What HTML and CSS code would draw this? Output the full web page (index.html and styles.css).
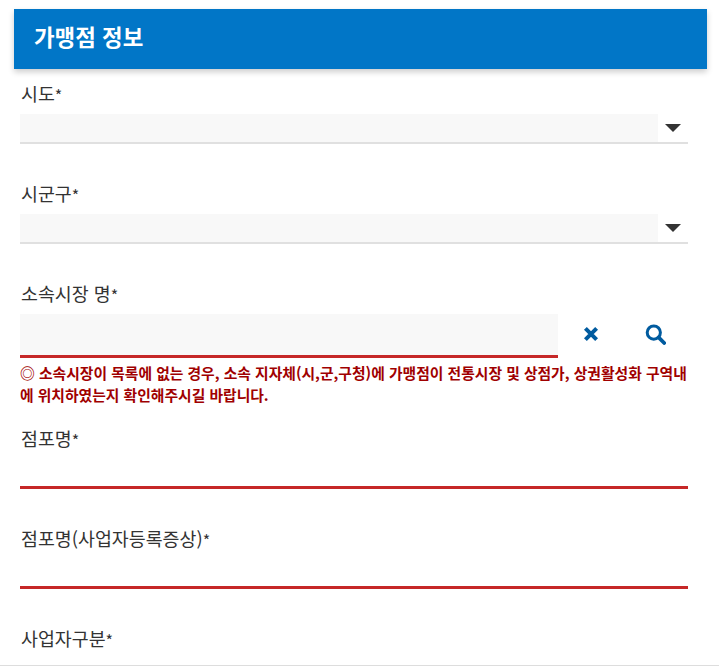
FILE: index.html
```html
<!DOCTYPE html>
<html lang="ko">
<head>
    <meta charset="UTF-8">
    <meta name="viewport" content="width=device-width, initial-scale=1.0">
    <title>가맹점 정보</title>
    <link rel="stylesheet" href="styles.css">
</head>
<body>
    <div class="page">
        <h2 class="section-title">가맹점 정보</h2>

        <div class="form-body">
            <div class="field field-first">
                <label class="field-label">시도<span class="req">*</span></label>
                <div class="select-box">
                    <div class="select-value"></div>
                    <div class="select-arrow"><span class="caret"></span></div>
                </div>
            </div>

            <div class="field">
                <label class="field-label">시군구<span class="req">*</span></label>
                <div class="select-box">
                    <div class="select-value"></div>
                    <div class="select-arrow"><span class="caret"></span></div>
                </div>
            </div>

            <div class="field">
                <label class="field-label">소속시장 명<span class="req">*</span></label>
                <div class="search-row">
                    <div class="search-input"></div>
                    <button class="icon-btn btn-clear" type="button" aria-label="지우기">
                        <svg width="16" height="16" viewBox="0 0 16 16"><path d="M2.4 2.4l11.2 11.2M13.6 2.4L2.4 13.6" stroke="#005b9f" stroke-width="4" fill="none"/></svg>
                    </button>
                    <button class="icon-btn btn-search" type="button" aria-label="검색">
                        <svg width="21" height="21" viewBox="0 0 21 21"><circle cx="8.8" cy="8.6" r="6.6" stroke="#005b9f" stroke-width="3" fill="none"/><path d="M13.6 13.4l5.6 5.6" stroke="#005b9f" stroke-width="3.8" fill="none" stroke-linecap="round"/></svg>
                    </button>
                </div>
                <p class="notice">◎ 소속시장이 목록에 없는 경우, 소속 지자체(시,군,구청)에 가맹점이 전통시장 및 상점가, 상권활성화 구역내에 위치하였는지 확인해주시길 바랍니다.</p>
            </div>

            <div class="field field-name">
                <label class="field-label">점포명<span class="req">*</span></label>
                <div class="text-input"></div>
            </div>

            <div class="field">
                <label class="field-label">점포명(사업자등록증상)<span class="req">*</span></label>
                <div class="text-input"></div>
            </div>

            <div class="field">
                <label class="field-label">사업자구분<span class="req">*</span></label>
            </div>
        </div>
    </div>
</body>
</html>
```

FILE: styles.css
```css
* {
    box-sizing: border-box;
    font-family: "Noto Sans CJK KR", "Noto Sans", sans-serif;
}

html, body {
    height: 100%;
}

body {
    margin: 0;
    background-color: #fff;
    color: #333;
    overflow: hidden;
}

.page {
    height: 666px;
    padding: 9px 12px 0 14px;
    border-bottom: 1px solid #ddd;
    overflow: hidden;
}

.section-title {
    margin: 0;
    height: 60px;
    padding-left: 20px;
    background-color: #0176c7;
    color: #fff;
    font-size: 22.4px;
    font-weight: 700;
    line-height: 54px;
    box-shadow: 0 3px 6px rgba(0,0,0,0.2);
}

.form-body {
    padding: 0 19px 0 6px;
}

.field {
    margin-top: 36px;
}

.field-first {
    margin-top: 11px;
}

.field-name {
    margin-top: 19px;
}

.field-label {
    display: block;
    height: 27px;
    padding-left: 1px;
    font-size: 18.4px;
    line-height: 26px;
    color: #333;
}

.req {
    font-size: 16px;
    vertical-align: -1px;
}

.select-box {
    display: flex;
    height: 30px;
    margin-top: 7px;
    border-bottom: 2px solid #e0e0e0;
}

.select-value {
    flex: 1;
    background-color: #f8f8f8;
}

.select-arrow {
    display: flex;
    width: 30px;
    align-items: center;
    justify-content: center;
}

.caret {
    width: 0;
    height: 0;
    border-left: 8px solid transparent;
    border-right: 8px solid transparent;
    border-top: 8px solid #333;
}

.search-row {
    display: flex;
    height: 44px;
    margin-top: 7px;
}

.search-input {
    width: 538px;
    background-color: #f8f8f8;
    border-bottom: 3px solid #c62828;
}

.icon-btn {
    display: flex;
    width: 65px;
    height: 40px;
    padding: 0;
    border: none;
    background: none;
    align-items: center;
    justify-content: center;
    cursor: pointer;
}

.notice {
    margin: 4px 0 0;
    font-size: 14.8px;
    font-weight: 700;
    line-height: 22px;
    color: #a00000;
}

.text-input {
    height: 37px;
    border-bottom: 3px solid #c62828;
}
```
